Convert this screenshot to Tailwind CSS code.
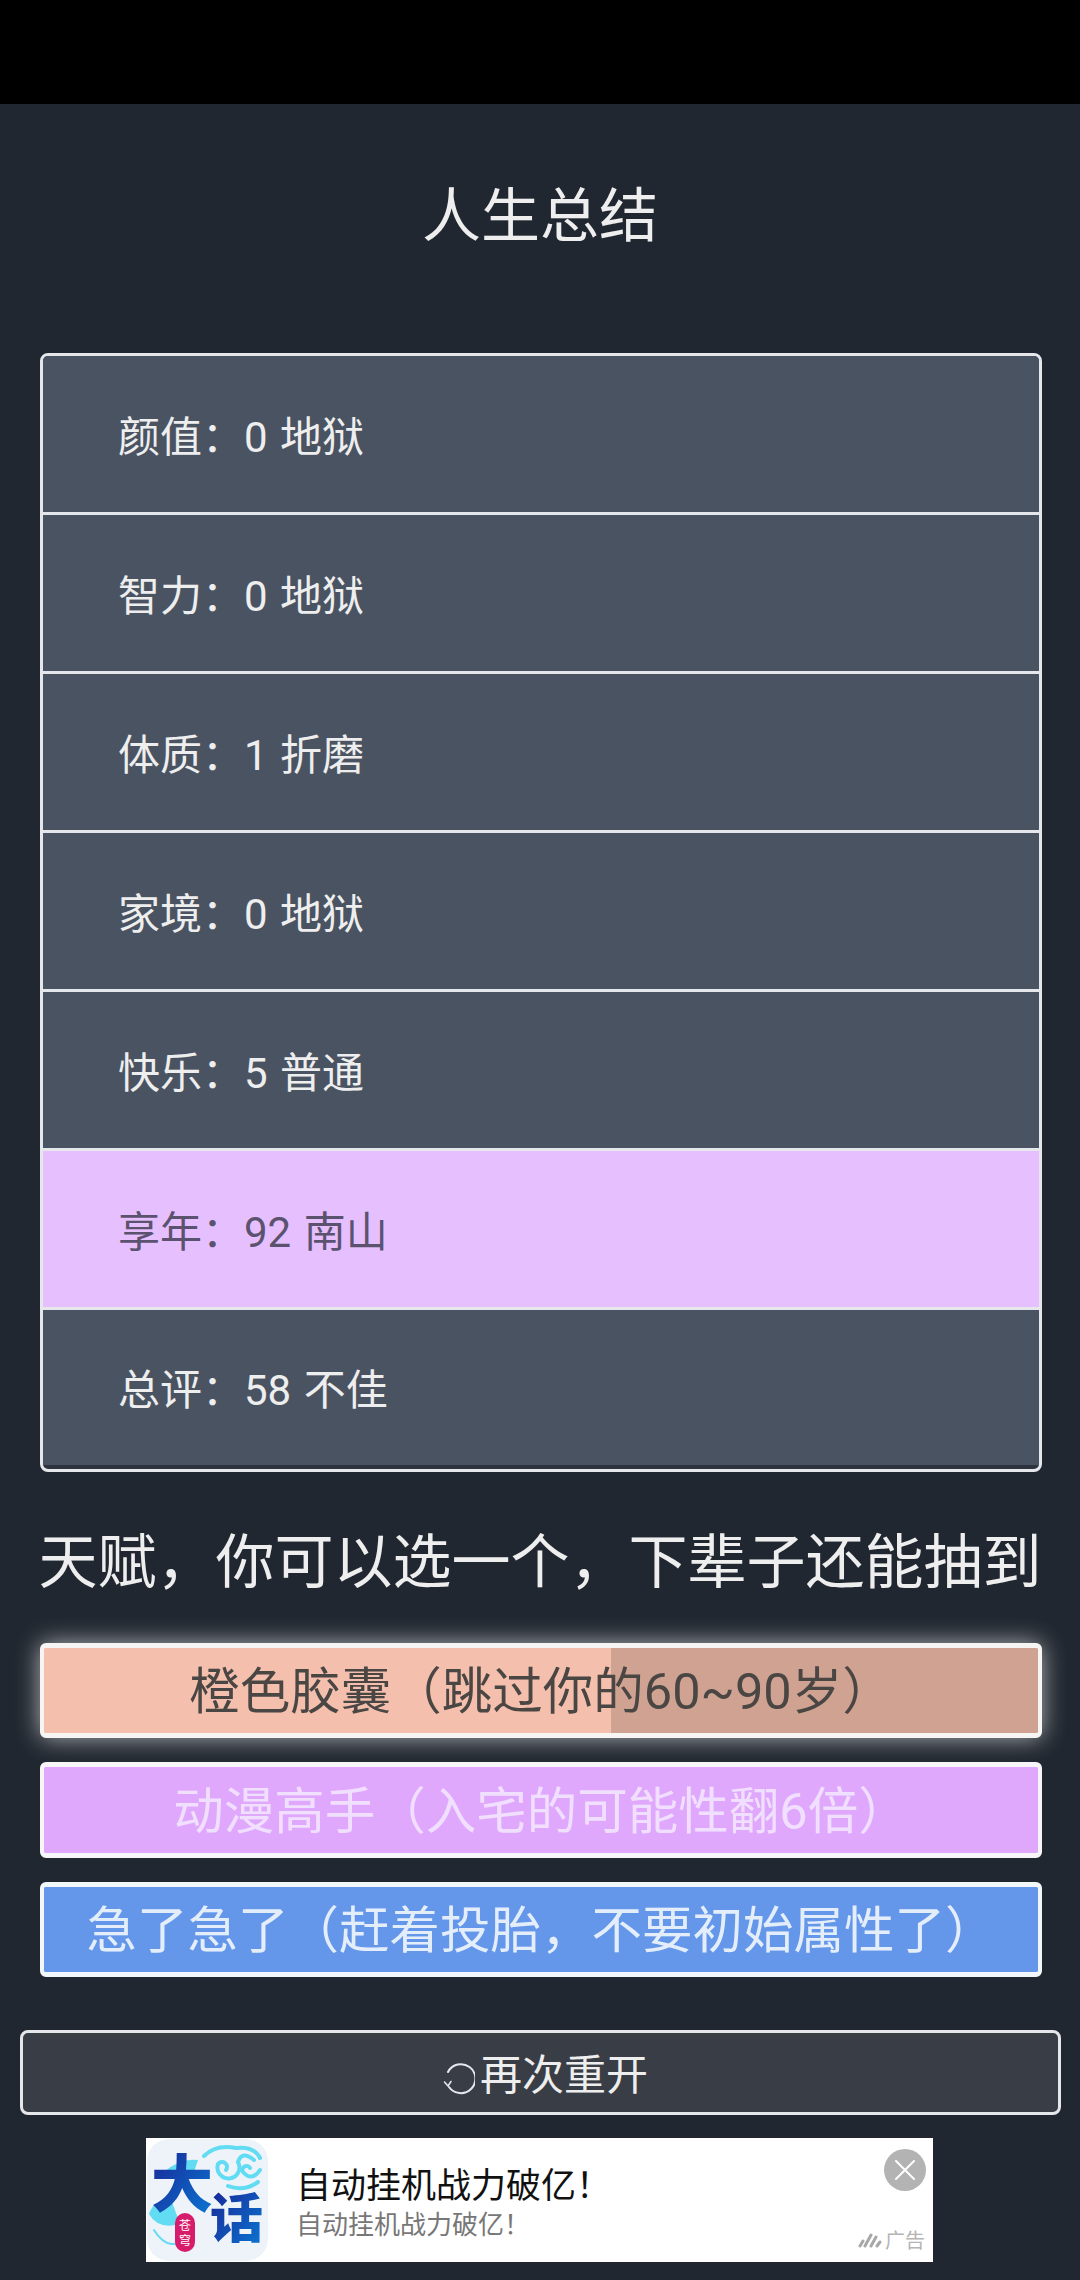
<!DOCTYPE html>
<html lang="zh-CN">
<head>
  <meta charset="UTF-8" />
  <meta name="viewport" content="width=device-width, initial-scale=1.0" />
  <title>人生总结</title>
  <script src="https://cdn.jsdelivr.net/npm/@tailwindcss/browser@4"></script>
</head>
<body class="bg-[#212730] text-[#eeeeee] font-['Roboto','Noto_Sans_CJK_SC',sans-serif] w-[1080px] h-[2280px] overflow-hidden">

  <!-- status bar -->
  <div class="h-[104px] bg-black"></div>

  <h1 class="h-[222px] mb-[27px] pt-[5px] flex items-center justify-center text-[59px] font-normal">人生总结</h1>

  <!-- summary -->
  <div class="ml-[40px] w-[1002px] h-[1119px] border-[3px] border-[#e5e7eb] rounded-lg overflow-hidden bg-[#2d3440] text-[42px] [word-spacing:2px]">
    <div class="h-[159px] pl-[75px] pt-[6px] flex items-center bg-[#4a5362] border-b-[3px] border-[#e5e7eb]">颜值：0 地狱</div>
    <div class="h-[159px] pl-[75px] pt-[6px] flex items-center bg-[#4a5362] border-b-[3px] border-[#e5e7eb]">智力：0 地狱</div>
    <div class="h-[159px] pl-[75px] pt-[6px] flex items-center bg-[#4a5362] border-b-[3px] border-[#e5e7eb]">体质：1 折磨</div>
    <div class="h-[159px] pl-[75px] pt-[6px] flex items-center bg-[#4a5362] border-b-[3px] border-[#e5e7eb]">家境：0 地狱</div>
    <div class="h-[159px] pl-[75px] pt-[6px] flex items-center bg-[#4a5362] border-b-[3px] border-[#e5e7eb]">快乐：5 普通</div>
    <div class="h-[159px] pl-[75px] pt-[6px] flex items-center bg-[#e6bfff] text-[#5b5270] border-b-[3px] border-[#e5e7eb]">享年：92 南山</div>
    <div class="h-[155px] pl-[75px] pt-[6px] flex items-center bg-[#4a5362]">总评：58 不佳</div>
  </div>

  <h2 class="mt-[40px] h-[100px] pt-[3px] flex items-center justify-center text-[59px] font-normal whitespace-nowrap">天赋，你可以选一个，下辈子还能抽到</h2>

  <!-- talents -->
  <div class="mt-[31px] ml-[40px] w-[1002px] flex flex-col gap-[24px] text-[50.5px]">
    <button class="relative h-[95px] pt-[3px] rounded-md border-x-[4px] border-y-[5px] border-[#f7f5f3] bg-[#f4bfac] text-[#4a4644] shadow-[0_0_24px_rgba(255,255,255,0.65)] overflow-hidden">
      <span class="absolute top-0 bottom-0 left-[567px] right-0 bg-black/15"></span>
      <span class="relative">橙色胶囊（跳过你的60~90岁）</span>
    </button>
    <button class="h-[96px] pt-[3px] rounded-md border-x-[4px] border-y-[5px] border-[#f7f5f8] bg-[#e0a8fc] text-[#f1dfff]">动漫高手（入宅的可能性翻6倍）</button>
    <button class="h-[95px] pt-[3px] rounded-md border-x-[4px] border-y-[5px] border-[#f2f7fa] bg-[#6496ea] text-[#e4eefa]">急了急了（赶着投胎，不要初始属性了）</button>
  </div>

  <!-- restart -->
  <button class="mt-[53px] ml-[20px] w-[1041px] h-[85px] pl-[10px] pt-[6px] rounded-lg border-[3px] border-[#e5e7eb] bg-[#393e46] flex items-center justify-center text-[42px]">
    <svg class="w-[32px] h-[34px] mt-[4px] mr-[5px]" viewBox="0 0 32 34" fill="none" stroke="#e5e7eb" stroke-width="2" stroke-linecap="round">
      <path d="M5 11 A14.5 14.5 0 1 1 6 26" />
      <path d="M1.5 21 L5 25 L8 20.5" stroke-width="1.6" />
    </svg>
    <span>再次重开</span>
  </button>

  <!-- ad -->
  <div class="relative mt-[23px] ml-[146px] w-[787px] h-[124px] bg-white flex items-center overflow-hidden">
    <svg class="w-[123px] h-[124px] shrink-0 overflow-visible" viewBox="0 0 123 124">
      <defs>
        <linearGradient id="blue" x1="0" y1="0" x2="1" y2="1">
          <stop offset="0" stop-color="#1a1f8f" />
          <stop offset="1" stop-color="#0a7ad6" />
        </linearGradient>
      </defs>
      <rect x="1" y="1" width="121" height="122" rx="22" fill="#eef3fa" />
      <g fill="none" stroke="#62dcf2" stroke-width="4" stroke-linecap="round">
        <path d="M80 32 A5 5 0 1 0 72 26 A11 11 0 1 0 92 24 Q96 12 108 22" />
        <path d="M104 30 A4 4 0 1 0 97 34 Q106 44 114 32" />
        <path d="M58 18 Q70 6 90 10 Q108 8 114 20" />
        <path d="M82 48 Q98 54 112 44" />
        <path d="M8 92 Q24 118 46 96" stroke-width="2" />
      </g>
      <path d="M18 34 Q34 20 52 22 L46 40 Z" fill="#62dcf2" />
      <path d="M3 76 Q8 60 26 64 L34 86 Q12 92 3 76 Z" fill="#62dcf2" />
      <text x="5" y="69" font-size="62" font-weight="900" fill="url(#blue)" font-family="Noto Sans CJK SC">大</text>
      <text x="64" y="100" font-size="53" font-weight="900" fill="url(#blue)" font-family="Noto Sans CJK SC">话</text>
      <rect x="29" y="75" width="20" height="39" rx="10" fill="#d81c6c" />
      <text x="33" y="92" font-size="12" fill="#ffffff" font-family="Noto Sans CJK SC">苍</text>
      <text x="33" y="107" font-size="12" fill="#ffffff" font-family="Noto Sans CJK SC">穹</text>
    </svg>
    <div class="ml-[27px] font-['Noto_Sans_CJK_SC',sans-serif]">
      <div class="text-[35px] leading-[46px] text-[#111111]">自动挂机战力破亿！</div>
      <div class="text-[26px] leading-[34px] text-[#777777]">自动挂机战力破亿！</div>
    </div>
    <!-- close button -->
    <div class="absolute left-[738px] top-[11px] w-[42px] h-[42px] rounded-full bg-[#b3b3b3] flex items-center justify-center">
      <svg class="w-[24px] h-[24px]" viewBox="0 0 24 24" stroke="#ffffff" stroke-width="2" stroke-linecap="round">
        <path d="M3 3 L21 21 M21 3 L3 21" />
      </svg>
    </div>
    <!-- ad mark -->
    <div class="absolute right-[8px] bottom-[9px] flex items-center gap-[3px] text-[20px] leading-[26px] text-[#b5b5b5] font-['Noto_Sans_CJK_SC',sans-serif]">
      <svg class="w-[24px] h-[16px]" viewBox="0 0 24 16" stroke="#a8a8a8" stroke-width="3" stroke-linecap="round">
        <path d="M2 14 L5 9 M7 14 L13 3 M13 14 L18 5 M19 14 L22 10" />
      </svg>
      <span>广告</span>
    </div>
  </div>

</body>
</html>
